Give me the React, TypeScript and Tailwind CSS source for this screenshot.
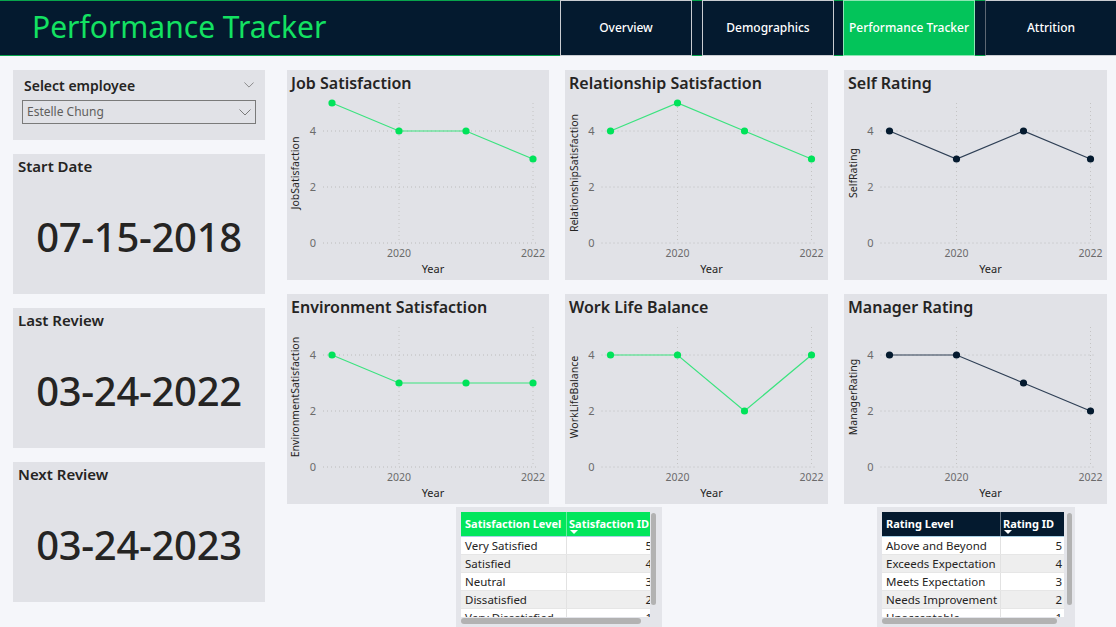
import React from 'react'

const navs = ['Overview', 'Demographics', 'Performance Tracker', 'Attrition']

const X = [45, 112, 179, 246]
const yOf = (v: number) => 147 - 28 * v

type ChartProps = {
  title: string
  yTitle: string
  values: number[]
  line: string
  dot: string
}

const LineChart = ({ title, yTitle, values, line, dot }: ChartProps) => {
  const pts = values.map((v, i) => `${X[i]},${yOf(v)}`).join(' ')
  return (
    <div className="h-[210px] bg-[#e1e2e7] flex flex-col">
      <div className="h-[26px] pl-[4px] pt-[3px] text-[16px] leading-5 font-semibold text-[#252423]">
        {title}
      </div>
      <svg width="100%" height="184" viewBox="0 0 262 184" className="block">
        {[0, 2, 4].map((v) => (
          <line key={v} x1={36} x2={251} y1={yOf(v)} y2={yOf(v)} stroke="#bcbcbc" strokeDasharray="1 3" />
        ))}
        {[112, 246].map((x) => (
          <line key={x} x1={x} x2={x} y1={7} y2={147} stroke="#c4c4c4" strokeDasharray="1 3" />
        ))}
        {[0, 2, 4].map((v) => (
          <text key={v} x={29} y={yOf(v) + 4} textAnchor="end" fontSize="11" fill="#6b6b6b">
            {v}
          </text>
        ))}
        <text x={112} y={161} textAnchor="middle" fontSize="10.5" fill="#6b6b6b">2020</text>
        <text x={246} y={161} textAnchor="middle" fontSize="10.5" fill="#6b6b6b">2022</text>
        <text x={146} y={177} textAnchor="middle" fontSize="11" fill="#252423">Year</text>
        <text transform="translate(12,77) rotate(-90)" textAnchor="middle" fontSize="10.5" fill="#252423">
          {yTitle}
        </text>
        <polyline points={pts} fill="none" stroke={line} strokeWidth="1.2" />
        {values.map((v, i) => (
          <circle key={i} cx={X[i]} cy={yOf(v)} r="3.6" fill={dot} />
        ))}
      </svg>
    </div>
  )
}

const DateCard = ({ label, date }: { label: string; date: string }) => (
  <div className="h-[140px] bg-[#e1e2e7] flex flex-col">
    <div className="pl-[5px] pt-[2px] text-[15px] leading-5 font-semibold text-[#252423]">{label}</div>
    <div className="flex-1 flex items-center justify-center pt-[4px] text-[40px] font-medium leading-none text-[#252423] tracking-[-0.3px]">
      {date}
    </div>
  </div>
)

const Chevron = ({ className }: { className: string }) => (
  <svg className={className} viewBox="0 0 12 7" fill="none" stroke="#7a7a7a" strokeWidth="1">
    <polyline points="0.5,0.5 6,6 11.5,0.5" />
  </svg>
)

type TableProps = {
  head: [string, string]
  rows: [string, number][]
  headBg: string
  c1: number
  c2: number
  w: number
  ml: number
  inner: number
}

const DataTable = ({ head, rows, headBg, c1, c2, w, ml, inner }: TableProps) => (
  <div className="relative h-[120px] bg-[#e4e5ea] pl-[5px] pt-[5px]" style={{ width: w, marginLeft: ml }}>
    <div className="overflow-hidden h-[105px]" style={{ width: inner }}>
      <div className="flex h-[25px] text-white text-[11px] font-bold border-b border-[#a9cfe4]" style={{ background: headBg, width: c1 + c2 }}>
        <div className="pl-[4px] pt-[4px] border-r border-white/40 whitespace-nowrap overflow-hidden" style={{ width: c1 }}>{head[0]}</div>
        <div className="pl-[2px] pt-[4px] whitespace-nowrap relative" style={{ width: c2 }}>
          {head[1]}
          <span className="absolute left-[3px] top-[18px] w-0 h-0 border-l-[4px] border-r-[4px] border-t-[4px] border-l-transparent border-r-transparent border-t-white" />
        </div>
      </div>
      {rows.map(([label, id], i) => (
        <div
          key={label}
          className={`flex h-[18px] text-[11.5px] leading-[18px] text-[#252423] border-b border-[#e6e6e6] ${i % 2 ? 'bg-[#eeeeee]' : 'bg-white'}`}
          style={{ width: c1 + c2 }}
        >
          <div className="pl-[4px] border-r border-[#e2e2e2] whitespace-nowrap overflow-hidden" style={{ width: c1 }}>{label}</div>
          <div className="text-right pr-[2px]" style={{ width: c2 }}>{id}</div>
        </div>
      ))}
    </div>
    <div className="h-[6px] mt-[1px] rounded-full bg-[#b2b2b2]" style={{ width: inner - 9 }} />
    <div className="absolute top-[6px] h-[92px] w-[5px] rounded-full bg-[#b2b2b2]" style={{ left: inner + 6 }} />
  </div>
)

export default function App() {
  return (
    <div className="w-[1116px] h-[627px] overflow-hidden bg-[#f5f6fa] font-['Segoe_UI','Noto_Sans',sans-serif]">
      <header className="flex h-[56px] bg-[#041a2f] border-y border-[#08a44c]">
        <h1 className="pl-[32px] w-[560px] text-[30px] leading-[52px] text-[#13e162]">Performance Tracker</h1>
        <nav className="flex -my-px h-[56px]">
          {navs.map((n, i) => (
            <div
              key={n}
              className={`flex items-center justify-center text-[12px] font-medium text-white border ${
                n === 'Performance Tracker' ? 'bg-[#03c45a] border-[#8de6b3]' : 'bg-[#041a2f] border-[#c9ccd1]'
              } ${i === 3 ? 'w-[131px] ml-[10px] border-l-[#5d6773] border-r-0' : 'w-[132px]'} ${i === 1 ? 'ml-[10px]' : ''} ${i === 2 ? 'ml-[9px]' : ''}`}
            >
              {n}
            </div>
          ))}
        </nav>
      </header>

      <main className="flex gap-[22px] pl-[13px] pt-[14px]">
        <div className="w-[252px] flex flex-col gap-[14px]">
          <div className="h-[70px] bg-[#e1e2e7] pl-[9px] pr-[9px] pt-[5px]">
            <div className="flex items-center justify-between pl-[2px] h-[20px]">
              <span className="text-[14px] font-semibold text-[#252423]">Select employee</span>
              <Chevron className="w-[10px] h-[6px] mr-[2px]" />
            </div>
            <div className="mt-[5px] h-[24px] border border-[#7a7a7a] flex items-center justify-between pl-[4px] pr-[4px]">
              <span className="text-[12px] text-[#605e5c]">Estelle Chung</span>
              <Chevron className="w-[12px] h-[7px]" />
            </div>
          </div>
          <DateCard label="Start Date" date="07-15-2018" />
          <DateCard label="Last Review" date="03-24-2022" />
          <DateCard label="Next Review" date="03-24-2023" />
        </div>

        <div className="flex flex-col">
          <div className="grid grid-cols-[262px_263px_263px] gap-x-[16px] gap-y-[14px]">
            <LineChart title="Job Satisfaction" yTitle="JobSatisfaction" values={[5, 4, 4, 3]} line="#3be37f" dot="#00e35a" />
            <LineChart title="Relationship Satisfaction" yTitle="RelationshipSatisfaction" values={[4, 5, 4, 3]} line="#3be37f" dot="#00e35a" />
            <LineChart title="Self Rating" yTitle="SelfRating" values={[4, 3, 4, 3]} line="#2e3f55" dot="#041a2f" />
            <LineChart title="Environment Satisfaction" yTitle="EnvironmentSatisfaction" values={[4, 3, 3, 3]} line="#3be37f" dot="#00e35a" />
            <LineChart title="Work Life Balance" yTitle="WorkLifeBalance" values={[4, 4, 2, 4]} line="#3be37f" dot="#00e35a" />
            <LineChart title="Manager Rating" yTitle="ManagerRating" values={[4, 4, 3, 2]} line="#2e3f55" dot="#041a2f" />
          </div>
          <div className="flex mt-[3px]">
            <DataTable
              head={['Satisfaction Level', 'Satisfaction ID']}
              rows={[['Very Satisfied', 5], ['Satisfied', 4], ['Neutral', 3], ['Dissatisfied', 2], ['Very Dissatisfied', 1]]}
              headBg="#02e65c"
              c1={106}
              c2={87}
              w={206}
              ml={169}
              inner={189}
            />
            <DataTable
              head={['Rating Level', 'Rating ID']}
              rows={[['Above and Beyond', 5], ['Exceeds Expectation', 4], ['Meets Expectation', 3], ['Needs Improvement', 2], ['Unacceptable', 1]]}
              headBg="#041a2f"
              c1={119}
              c2={63}
              w={198}
              ml={215}
              inner={184}
            />
          </div>
        </div>
      </main>
    </div>
  )
}
